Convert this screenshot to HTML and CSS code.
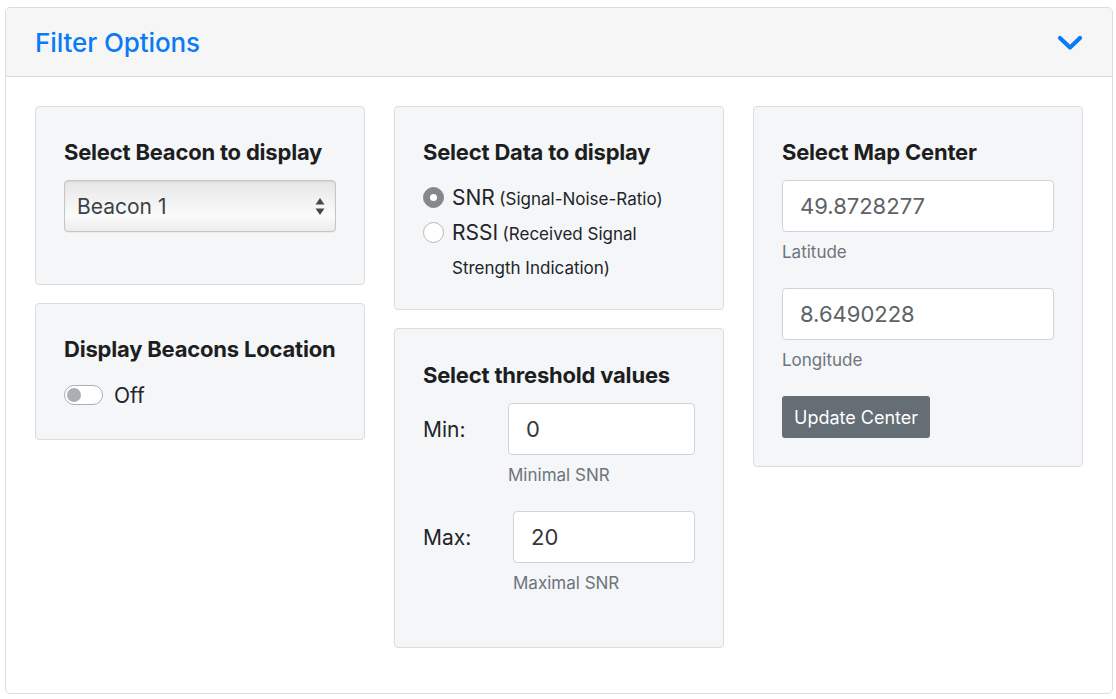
FILE: index.html
```html
<!DOCTYPE html>
<html>
<head>
<meta charset="utf-8">
<link rel="stylesheet" href="styles.css">
</head>
<body>
<div class="panel">
  <div class="panel-header">
    <h2 class="panel-title">Filter Options</h2>
    <svg class="chevron" width="26" height="16" viewBox="0 0 26 16"><path d="M3 3 L13 12.5 L23 3" fill="none" stroke="#0a7bf5" stroke-width="4.2" stroke-linecap="round" stroke-linejoin="round"/></svg>
  </div>
  <div class="panel-body">
    <div class="col">
      <div class="card">
        <h5 class="card-title">Select Beacon to display</h5>
        <div class="select">
          <span>Beacon 1</span>
          <svg class="updown" width="10" height="20" viewBox="0 0 10 20"><path d="M5 2 L9.5 8.5 H0.5 Z" fill="#4a4a4a"/><path d="M5 19 L9.5 12.5 H0.5 Z" fill="#4a4a4a"/></svg>
        </div>
      </div>
      <div class="card card-switch">
        <h5 class="card-title">Display Beacons Location</h5>
        <div class="switch-row">
          <span class="switch"><span class="knob"></span></span>
          <span class="switch-label">Off</span>
        </div>
      </div>
    </div>
    <div class="col">
      <div class="card card-radio">
        <h5 class="card-title">Select Data to display</h5>
        <div class="radio-row">
          <span class="radio checked"></span>
          <span class="radio-text"><span class="big">SNR</span> <span class="small">(Signal-Noise-Ratio)</span></span>
        </div>
        <div class="radio-row">
          <span class="radio"></span>
          <span class="radio-text"><span class="big">RSSI</span> <span class="small">(Received Signal<br>Strength Indication)</span></span>
        </div>
      </div>
      <div class="card card-threshold">
        <h5 class="card-title">Select threshold values</h5>
        <div class="th-row">
          <span class="th-label">Min:</span>
          <div class="th-field">
            <div class="input dark">0</div>
            <div class="help">Minimal SNR</div>
          </div>
        </div>
        <div class="th-row">
          <span class="th-label">Max:</span>
          <div class="th-field">
            <div class="input dark">20</div>
            <div class="help">Maximal SNR</div>
          </div>
        </div>
      </div>
    </div>
    <div class="col">
      <div class="card card-map">
        <h5 class="card-title">Select Map Center</h5>
        <div class="input">49.8728277</div>
        <div class="help">Latitude</div>
        <div class="input second">8.6490228</div>
        <div class="help">Longitude</div>
        <button class="btn">Update Center</button>
      </div>
    </div>
  </div>
</div>
</body>
</html>
```
FILE: styles.css
```css
* { box-sizing: border-box; }
html, body { margin: 0; padding: 0; background: #fff; }
body {
  font-family: Inter, "Noto Sans", "Liberation Sans", sans-serif;
  color: #212529;
  padding: 7px 3px 6px 5px;
}
.panel {
  border: 1px solid #dcdcdc;
  border-radius: 5px;
  height: 687px;
  overflow: hidden;
}
.panel-header {
  height: 69px;
  background: #f6f6f6;
  border-bottom: 1px solid #dcdcdc;
  display: flex;
  align-items: center;
  justify-content: space-between;
  padding: 0 27px 0 29px;
}
.panel-title {
  margin: 0;
  font-size: 26px;
  font-weight: 500;
  color: #0a7bf5;
  letter-spacing: -0.1px;
}
.chevron { display: block; margin-top: 1px; margin-right: 2px; }
.panel-body {
  display: flex;
  gap: 29px;
  padding: 29px 29px 0 29px;
}
.col {
  width: 330px;
  display: flex;
  flex-direction: column;
  gap: 18px;
  align-items: stretch;
}
.card {
  background: #f5f6f8;
  border: 1px solid #dadcde;
  border-radius: 4px;
  padding: 33px 28px 32px 28px;
}
.card-title {
  margin: 0;
  font-size: 22px;
  line-height: 24px;
  font-weight: 700;
  letter-spacing: -0.2px;
  color: #1c1e21;
}
.select {
  margin-top: 16px;
  margin-bottom: 20px;
  height: 52px;
  border: 1px solid #c4c6c8;
  border-radius: 4px;
  background: linear-gradient(#e6e6e6 0%, #f4f4f4 45%, #fbfbfb 70%, #ececec 100%);
  box-shadow: inset 0 1px 2px rgba(0,0,0,0.08), 0 1px 1px rgba(0,0,0,0.05);
  display: flex;
  align-items: center;
  justify-content: space-between;
  padding: 0 10px 0 12px;
  font-size: 21px;
  color: #3d4247;
}
.updown { display: block; }
.switch-row {
  margin-top: 22px;
  display: flex;
  align-items: center;
  height: 24px;
}
.switch {
  width: 39px;
  height: 20px;
  border: 1px solid #a9afb5;
  border-radius: 10px;
  background: #fff;
  position: relative;
  display: inline-block;
}
.knob {
  position: absolute;
  left: 2px;
  top: 2px;
  width: 14px;
  height: 14px;
  border-radius: 50%;
  background: #a9afb5;
}
.switch-label {
  margin-left: 11px;
  font-size: 21px;
  color: #212529;
}
.card-radio { padding-bottom: 24px; }
.radio-row {
  display: flex;
  align-items: flex-start;
}
.radio-row:first-of-type { margin-top: 17px; }
.radio {
  width: 21px;
  height: 21px;
  border-radius: 50%;
  border: 1px solid #b5b8bb;
  background: #fff;
  margin-top: 6px;
  flex: none;
  position: relative;
}
.radio.checked {
  background: #85878c;
  border-color: #85878c;
}
.radio.checked::after {
  content: "";
  position: absolute;
  left: 6px;
  top: 6px;
  width: 7px;
  height: 7px;
  border-radius: 50%;
  background: #fff;
}
.radio-text {
  margin-left: 8px;
  line-height: 34px;
  color: #212529;
}
.big { font-size: 21px; }
.small { font-size: 17px; }
.card-threshold { padding-top: 34px; padding-bottom: 52px; }
.th-row {
  display: flex;
  align-items: flex-start;
  margin-top: 16px;
}
.th-row + .th-row { margin-top: 24px; }
.th-label {
  font-size: 21px;
  line-height: 54px;
  color: #212529;
  flex: none;
}
.th-row:first-of-type .th-label { width: 85px; }
.th-row + .th-row .th-label { width: 90px; }
.th-field { flex: 1; }
.input {
  height: 52px;
  background: #fff;
  border: 1px solid #ced4da;
  border-radius: 4px;
  font-size: 22px;
  line-height: 50px;
  padding: 0 17px;
  color: #5d6368;
}
.input.dark { color: #33383d; }
.card-map .input:first-of-type { margin-top: 16px; }
.input.second { margin-top: 24px; }
.help {
  margin-top: 8px;
  font-size: 17px;
  line-height: 24px;
  color: #6c757d;
}
.btn {
  margin-top: 24px;
  display: block;
  height: 42px;
  padding: 0 12px;
  background: #656d75;
  color: #fff;
  border: none;
  border-radius: 3px;
  font-family: inherit;
  font-size: 18px;
}
.card-map { padding-bottom: 28px; }
```
